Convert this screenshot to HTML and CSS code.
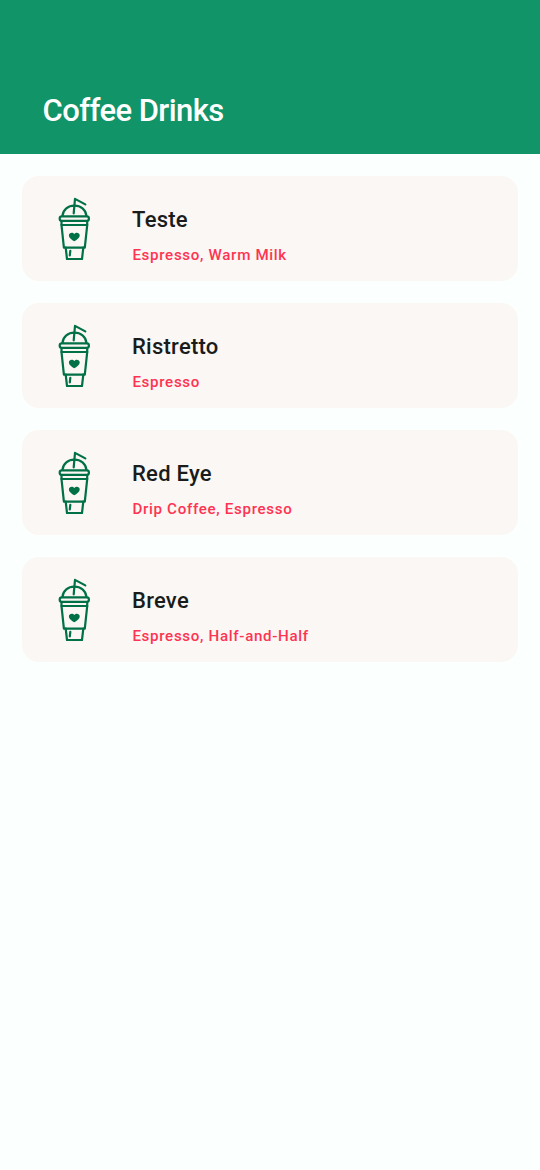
FILE: index.html
```html
<!DOCTYPE html>
<html lang="en">
<head>
<meta charset="utf-8">
<title>Coffee Drinks</title>
<link rel="stylesheet" href="styles.css">
</head>
<body>
<svg class="sprite" aria-hidden="true">
  <symbol id="cup" viewBox="0 0 50 76">
    <g fill="none" stroke="#007046" stroke-width="2.200" stroke-linejoin="round" stroke-linecap="round">
      <path d="M23.7 23.4 25 8.900l10.300 5.500"/>
      <path d="M12.400 26C13.200 19.600 18 15.700 24.400 15.700S35.700 19.600 36.500 26"/>
      <rect x="9.700" y="26.300" width="29.200" height="4.600" rx="2.200"/>
      <path d="M11.500 31V35H37.200V31"/>
      <path d="M11.500 35.200 13.900 57.700H34.800L37.200 35.200"/>
      <path d="M15.700 57.700 17 69H32L33.300 57.700"/>
      <path d="M20.300 60.900 19.800 65.400"/>
    </g>
    <path fill="#007046" d="M24.300 51.300C22 50 18.900 48 18.900 45.300 18.900 42.600 22.600 41.600 24.300 44 26 41.600 29.700 42.600 29.700 45.300 29.700 48 26.600 50 24.300 51.300Z"/>
  </symbol>
</svg>
<header class="bar"><h1 class="bar-title">Coffee Drinks</h1></header>
<main class="list">
  <article class="card"><svg class="icon"><use href="#cup"/></svg><div class="info"><h2 class="name">Teste</h2><p class="parts">Espresso, Warm Milk</p></div></article>
  <article class="card"><svg class="icon"><use href="#cup"/></svg><div class="info"><h2 class="name">Ristretto</h2><p class="parts">Espresso</p></div></article>
  <article class="card"><svg class="icon"><use href="#cup"/></svg><div class="info"><h2 class="name">Red Eye</h2><p class="parts">Drip Coffee, Espresso</p></div></article>
  <article class="card"><svg class="icon"><use href="#cup"/></svg><div class="info"><h2 class="name">Breve</h2><p class="parts">Espresso, Half-and-Half</p></div></article>
</main>
</body>
</html>
```
FILE: styles.css
```css
* { box-sizing: border-box; }
body {
  margin: 0;
  min-height: 1170px;
  background: #fbfffe;
  font-family: Roboto, sans-serif;
  font-weight: 500;
}
h1, h2, p { margin: 0; font-weight: 500; }
.sprite { display: none; }
.bar {
  height: 154px;
  padding: 92px 42.5px 0;
  background: #109468;
}
.bar-title {
  font-size: 31px;
  line-height: 38px;
  letter-spacing: -0.58px;
  color: #fff;
}
.list {
  display: flex;
  flex-direction: column;
  gap: 22px;
  padding: 22px;
}
.card {
  display: flex;
  height: 105px;
  padding-left: 28px;
  border-radius: 17px;
  background: #fbf7f4;
}
.icon {
  flex: none;
  width: 50px;
  height: 76px;
  margin-top: 14px;
}
.info { padding: 27px 0 0 32px; }
.name {
  font-size: 22px;
  line-height: 33px;
  letter-spacing: 0.25px;
  color: #191c1b;
}
.parts {
  margin-top: 8px;
  padding-left: 0.4px;
  font-size: 15.125px;
  line-height: 22px;
  letter-spacing: 0.68px;
  color: #ff3352;
}
```
